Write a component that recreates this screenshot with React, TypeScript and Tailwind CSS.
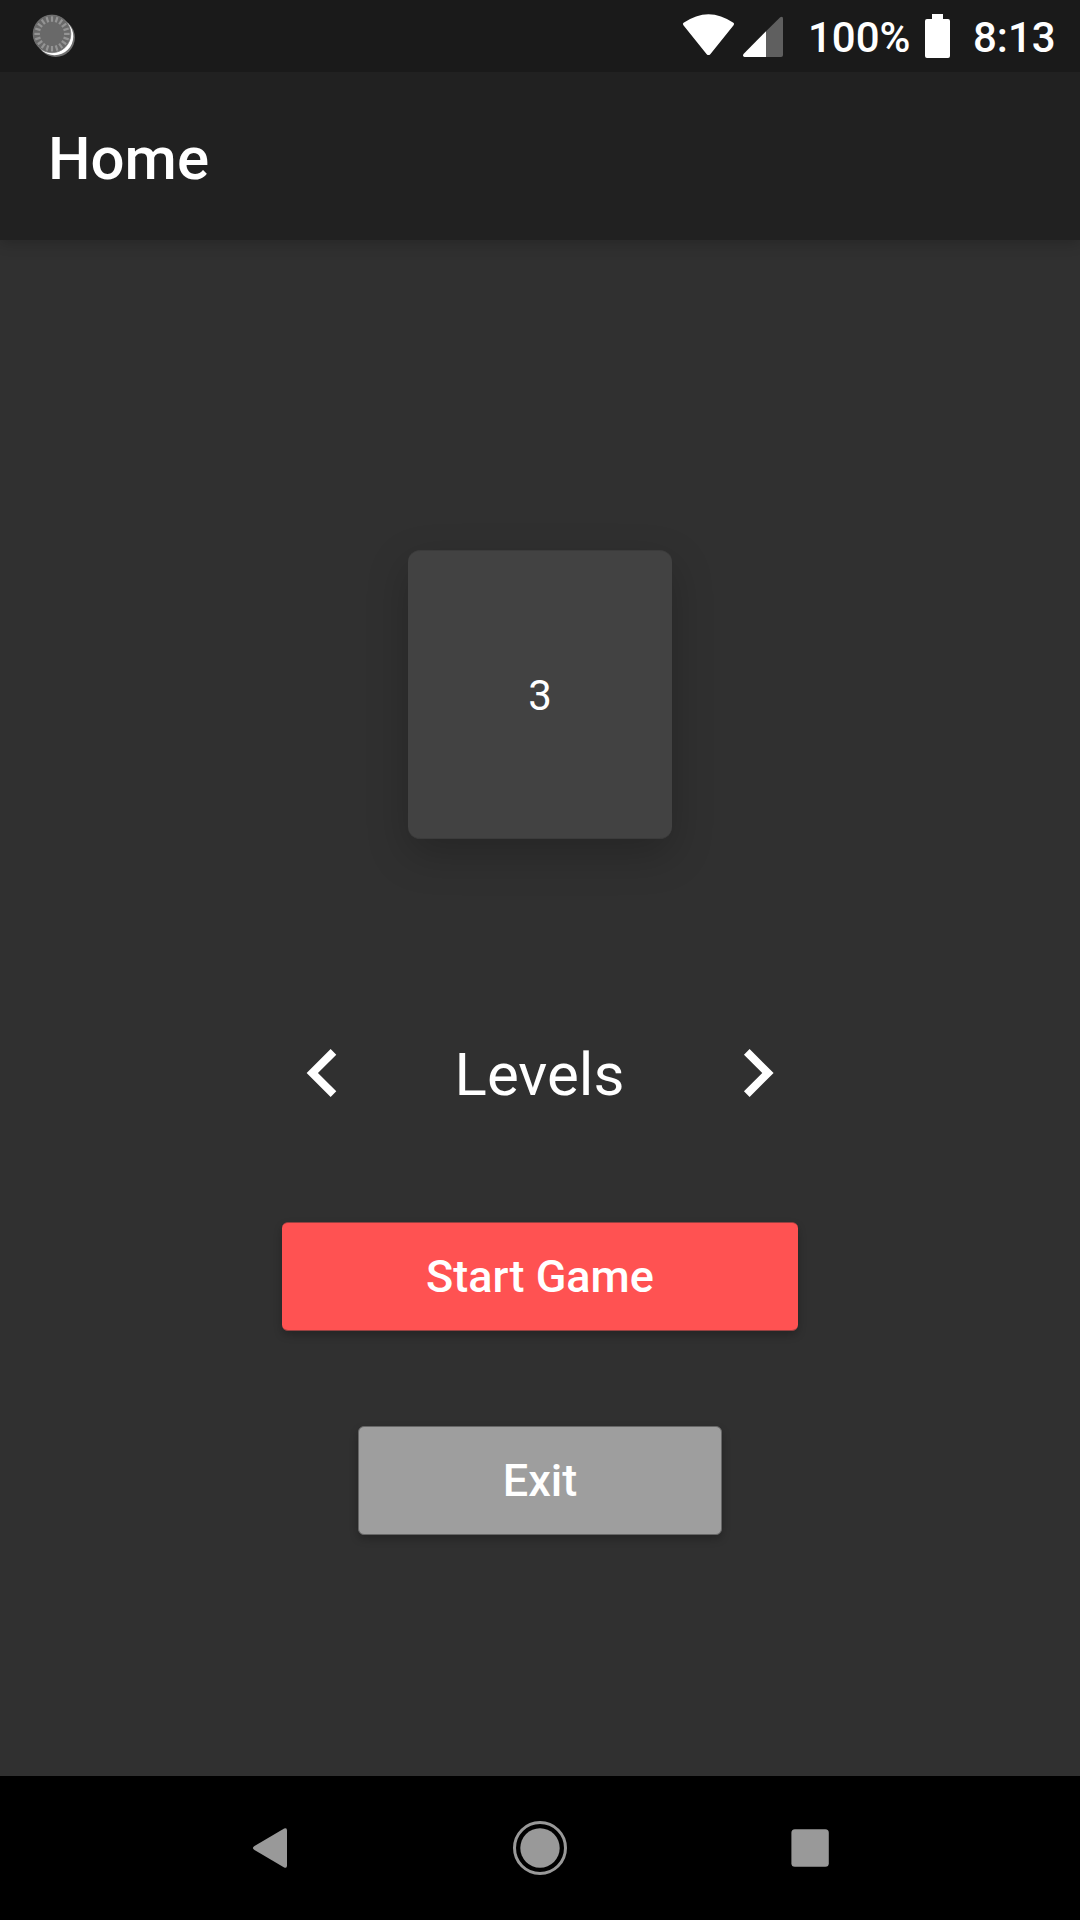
const spokes = Array.from({ length: 20 }, (_, i) => i * 18);

function SyncIcon() {
  return (
    <svg className="ml-[30px]" width="48" height="72" viewBox="30 0 48 72">
      <circle cx="55.7" cy="37.7" r="19.2" fill="#707070" />
      <circle cx="54.5" cy="36.5" r="18.8" fill="#fff" />
      <circle cx="52" cy="33.9" r="18.8" fill="#696969" stroke="#7c7c7c" strokeWidth="0.8" />
      {spokes.map((angle) => (
        <path key={angle} d="M52 16.3V21.8" stroke="#949494" strokeWidth="2.2" transform={`rotate(${angle} 52 33.9)`} />
      ))}
    </svg>
  );
}

export default function App() {
  return (
    <div className="flex h-[1920px] w-[1080px] flex-col overflow-hidden bg-[#303030] font-['Roboto',sans-serif] text-white">
      <div className="z-20 flex h-[72px] shrink-0 items-center bg-[#1a1a1a]">
        <SyncIcon />
        <svg className="ml-[600px]" width="110" height="72" viewBox="678 0 110 72">
          <path d="M683.4 25.2Q682.2 23.8 683.6 22.8Q708.5 5.5 733.4 22.8Q734.8 23.8 733.6 25.2L710.3 54.2Q708.5 56 706.7 54.2Z" fill="#fff" />
          <path d="M766 31.3L780.2 17.3Q783 15.8 783 18.5V55Q783 57 781 57H766Z" fill="#5f5f5f" />
          <path d="M766 31.3V57H744.5Q742.3 56.3 743.5 54Z" fill="#fff" />
        </svg>
        <div className="ml-[20px] w-[117px] pt-[3px] text-[42px] leading-none font-medium">100%</div>
        <svg width="25" height="44" viewBox="0 0 25 44">
          <path d="M7 0H18V5H23Q25 5 25 7V42Q25 44 23 44H2Q0 44 0 42V7Q0 5 2 5H7Z" fill="#fff" />
        </svg>
        <div className="ml-[23px] pt-[3px] text-[42px] leading-none font-medium">8:13</div>
      </div>
      <header className="z-10 flex h-[168px] shrink-0 items-center bg-[#212121] pt-[5px] pl-12 shadow-[0_4px_12px_rgba(0,0,0,0.18)]">
        <h1 className="text-[60px] font-medium">Home</h1>
      </header>
      <main className="flex flex-1 flex-col items-center pt-[310px]">
        <div className="flex h-[289px] w-[264px] shrink-0 items-center justify-center rounded-[12px] border-y border-[#3b3b3b] bg-[#424242] pt-[2px] text-[42px] shadow-[0_15px_42px_rgba(0,0,0,0.22)]">3</div>
        <div className="mt-[176px] flex h-[120px] w-[532px] items-center justify-between">
          <svg className="-mt-[4px]" width="96" height="96" viewBox="0 0 24 24" fill="#fff"><path d="M15.57 7.41 14.16 6l-6 6 6 6 1.41-1.41L10.99 12z" /></svg>
          <span className="-ml-px text-[60px]">Levels</span>
          <svg className="-mt-[4px]" width="96" height="96" viewBox="0 0 24 24" fill="#fff"><path d="M9.9 6 8.49 7.41 13.07 12l-4.58 4.59L9.9 18l6-6z" /></svg>
        </div>
        <button className="mt-[87px] h-[109px] w-[516px] rounded-[6px] border-y border-[#974040] bg-[#ff5252] text-[45px] font-medium shadow-[0_4px_8px_rgba(0,0,0,0.24)]">Start Game</button>
        <button className="mt-[95px] h-[109px] w-[364px] rounded-[6px] border border-[#676767] bg-[#9e9e9e] text-[45px] font-medium shadow-[0_4px_8px_rgba(0,0,0,0.24)]">Exit</button>
      </main>
      <nav className="flex h-[144px] shrink-0 items-center justify-center gap-[210px] bg-black">
        <svg width="60" height="60" viewBox="240 1818 60 60" fill="#999">
          <path d="M284.2 1828.5Q287 1827.2 287 1830.5V1865.5Q287 1868.8 284.2 1867.5L254.5 1850Q251.3 1848 254.5 1846Z" />
        </svg>
        <svg width="60" height="60" viewBox="510 1818 60 60">
          <circle cx="540" cy="1848" r="19.7" fill="#999" />
          <circle cx="540" cy="1848" r="25.5" fill="none" stroke="#999" strokeWidth="3" />
        </svg>
        <svg width="60" height="60" viewBox="780 1818 60 60" fill="#999">
          <rect x="791.4" y="1829.3" width="37.4" height="37.4" rx="3.5" />
        </svg>
      </nav>
    </div>
  );
}
